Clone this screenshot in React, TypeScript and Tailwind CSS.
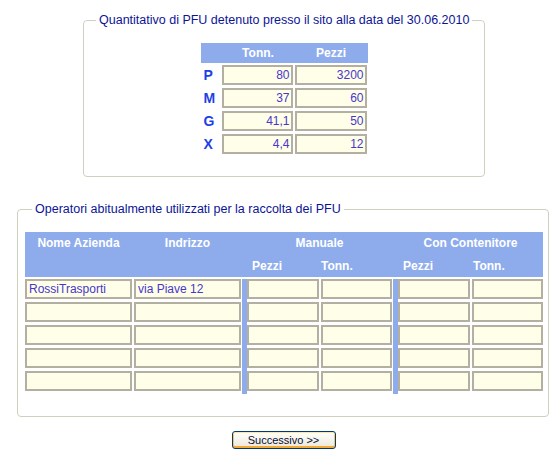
import React from 'react';

const topRows = [
  { label: 'P', tonn: '80', pezzi: '3200' },
  { label: 'M', tonn: '37', pezzi: '60' },
  { label: 'G', tonn: '41,1', pezzi: '50' },
  { label: 'X', tonn: '4,4', pezzi: '12' },
];

const operatori = [
  { nome: 'RossiTrasporti', indirizzo: 'via Piave 12' },
  { nome: '', indirizzo: '' },
  { nome: '', indirizzo: '' },
  { nome: '', indirizzo: '' },
  { nome: '', indirizzo: '' },
];

const cellBase =
  'h-[20px] border-2 border-[#b3b0a2] bg-[#fffee8] text-[12px] leading-[16px] text-[#4638cc] overflow-hidden whitespace-nowrap';

const Separator = () => <div className="w-[6px] border-l border-white bg-[#8eacec]" />;

const App: React.FC = () => {
  return (
    <div className="w-[559px] h-[453px] bg-white pt-[13px] font-['Liberation_Sans',Arial,sans-serif] text-[12px]">
      {/* Quantitativo */}
      <fieldset className="ml-[83px] w-[402px] border border-[#d0d0bf] rounded-[4px] pb-[22px]">
        <legend className="ml-[12px] px-[3px] text-[12.5px] leading-[15px] text-[#0c1496]">
          Quantitativo di PFU detenuto presso il sito alla data del 30.06.2010
        </legend>
        <div className="mt-[15px] w-[167px] mx-auto">
          <div className="flex h-[20px] items-center bg-[#8eacec] font-bold text-white">
            <div className="w-[21px]" />
            <div className="w-[73px] text-center">Tonn.</div>
            <div className="w-[73px] text-center">Pezzi</div>
          </div>
          <div className="mt-[2px] flex flex-col gap-[3px]">
            {topRows.map(row => (
              <div key={row.label} className="flex items-center">
                <div className="w-[21px] pl-[3px] text-[14px] leading-[16px] font-bold text-[#1f3fe6]">{row.label}</div>
                <div className={`${cellBase} w-[71px] pr-[1px] text-right`}>{row.tonn}</div>
                <div className={`${cellBase} ml-[2px] w-[72px] pr-[1px] text-right`}>{row.pezzi}</div>
              </div>
            ))}
          </div>
        </div>
      </fieldset>

      {/* Operatori */}
      <fieldset className="mt-[25px] ml-[17px] w-[532px] border border-[#d0d0bf] rounded-[4px] pb-[22px]">
        <legend className="ml-[14px] px-[3px] text-[12.5px] leading-[15px] text-[#0c1496]">
          Operatori abitualmente utilizzati per la raccolta dei PFU
        </legend>
        <div className="mt-[15px] ml-[7px] w-[518px]">
          <div className="h-[45px] bg-[#8eacec] font-bold text-white">
            <div className="flex h-[22px] items-center">
              <div className="w-[107px] text-center">Nome Azienda</div>
              <div className="w-[2px]" />
              <div className="w-[107px] text-center">Indrizzo</div>
              <div className="w-[6px]" />
              <div className="w-[145px] text-center">Manuale</div>
              <div className="w-[6px]" />
              <div className="w-[145px] text-center">Con Contenitore</div>
            </div>
            <div className="flex h-[23px] items-center">
              <div className="w-[222px]" />
              <div className="w-[72px] pl-[5px]">Pezzi</div>
              <div className="w-[2px]" />
              <div className="w-[71px]">Tonn.</div>
              <div className="w-[6px]" />
              <div className="w-[72px] pl-[5px]">Pezzi</div>
              <div className="w-[2px]" />
              <div className="w-[71px] pl-[1px]">Tonn.</div>
            </div>
          </div>

          <div className="mt-[2px] flex">
            <div className="flex flex-col gap-[3px] pb-[3px]">
              {operatori.map((op, i) => (
                <div key={i} className="flex gap-[2px]">
                  <div className={`${cellBase} w-[107px] pl-[2px]`}>{op.nome}</div>
                  <div className={`${cellBase} w-[107px] pl-[2px]`}>{op.indirizzo}</div>
                </div>
              ))}
            </div>
            <Separator />
            <div className="flex flex-col gap-[3px] pb-[3px]">
              {operatori.map((_, i) => (
                <div key={i} className="flex gap-[2px]">
                  <div className={`${cellBase} w-[72px]`} />
                  <div className={`${cellBase} w-[71px]`} />
                </div>
              ))}
            </div>
            <Separator />
            <div className="flex flex-col gap-[3px] pb-[3px]">
              {operatori.map((_, i) => (
                <div key={i} className="flex gap-[2px]">
                  <div className={`${cellBase} w-[72px]`} />
                  <div className={`${cellBase} w-[71px]`} />
                </div>
              ))}
            </div>
          </div>
        </div>
      </fieldset>

      <div className="mt-[14px] flex justify-center pl-[8px]">
        <button
          type="button"
          className="h-[18px] w-[104px] rounded-[3px] border border-[#003c74] bg-linear-to-b from-white to-[#ece9d8] text-[11px] leading-[14px] text-[#0a0a30] shadow-[inset_0_-2px_0_#f5a935,inset_0_1px_0_#ffe6a8,inset_1px_0_0_#fbc660,inset_-1px_0_0_#fbc660]"
        >
          {'Successivo >>'}
        </button>
      </div>
    </div>
  );
};

export default App;
